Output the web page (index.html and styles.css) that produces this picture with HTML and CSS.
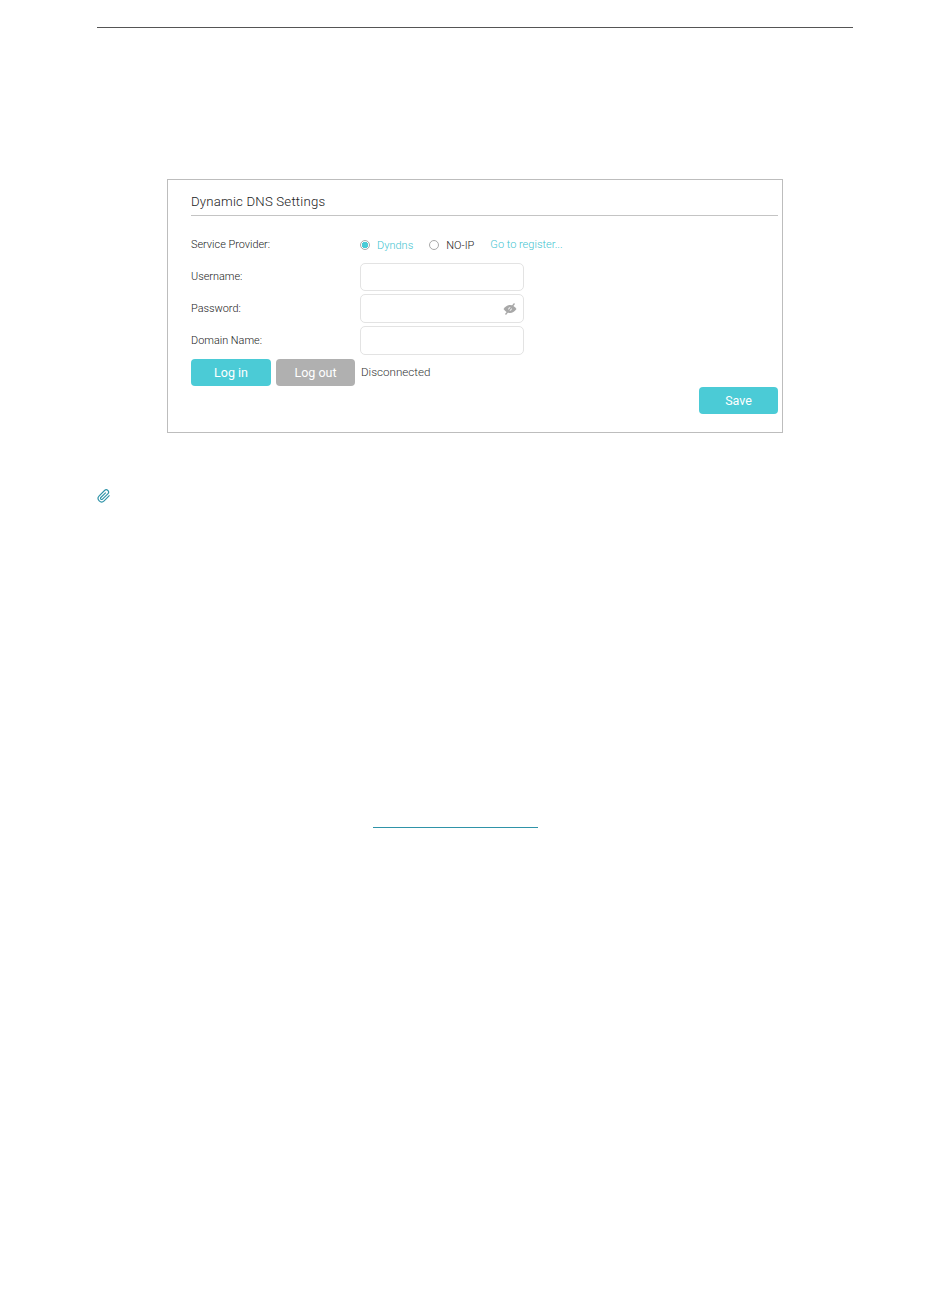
FILE: index.html
```html
<!DOCTYPE html>
<html lang="en">
<head>
<meta charset="utf-8">
<title>Dynamic DNS Settings</title>
<link rel="stylesheet" href="styles.css">
</head>
<body>
<main class="page">
  <hr class="top-rule">
  <section class="card">
    <h2 class="card-title">Dynamic DNS Settings</h2>
    <div class="rows">
      <div class="row row-provider">
        <span class="label">Service Provider:</span>
        <div class="providers">
          <span class="radio radio-on"></span>
          <span class="option option-on">Dyndns</span>
          <span class="radio"></span>
          <span class="option">NO-IP</span>
          <span class="register">Go to register...</span>
        </div>
      </div>
      <div class="row">
        <span class="label">Username:</span>
        <div class="field"></div>
      </div>
      <div class="row row-password">
        <span class="label">Password:</span>
        <div class="field">
          <svg class="eye" viewBox="0 0 14 12" width="14" height="12" aria-hidden="true">
            <path class="eye-body" d="M0.5 6C2.5 3.2 4.6 2 7 2s4.500 1.200 6.500 4C11.500 8.800 9.400 10 7 10S2.500 8.800 0.500 6Z"/>
            <circle class="eye-hole" cx="7" cy="6" r="1.700"/>
            <path class="eye-slash" d="M2.500 11.500 11.500 0.500"/>
          </svg>
        </div>
      </div>
      <div class="row row-domain">
        <span class="label">Domain Name:</span>
        <div class="field"></div>
      </div>
      <div class="actions">
        <button class="btn btn-login" type="button">Log in</button>
        <button class="btn btn-logout" type="button">Log out</button>
        <span class="status">Disconnected</span>
      </div>
      <div class="save-row">
        <button class="btn btn-save" type="button">Save</button>
      </div>
    </div>
  </section>
  <svg class="clip" viewBox="0 0 24 24" width="14" height="14" aria-hidden="true">
    <path d="M21.440 11.050l-9.190 9.190a6 6 0 0 1-8.490-8.490l9.190-9.190a4 4 0 0 1 5.660 5.660l-9.200 9.190a2 2 0 0 1-2.830-2.830l8.490-8.480"/>
  </svg>
  <div class="link-line"></div>
</main>
</body>
</html>
```

FILE: styles.css
```css
* {
  box-sizing: border-box;
}

html,
body {
  margin: 0;
  background: #fff;
}

body {
  font-family: Roboto, "Liberation Sans", sans-serif;
  font-weight: 300;
  color: #333;
}

.page {
  width: 950px;
  height: 1290px;
  padding: 27px 97px 0;
  overflow: hidden;
}

.top-rule {
  margin: 0;
  width: 756px;
  height: 1px;
  border: 0;
  background: #555;
}

.card {
  margin: 151px 0 0 70px;
  width: 616px;
  height: 254px;
  padding: 0 4px 0 23px;
  border: 1px solid #bdbdbd;
}

.card-title {
  margin: 0;
  height: 36px;
  padding-top: 13px;
  border-bottom: 1px solid #c4c4c4;
  font-size: 13.200px;
  letter-spacing: 0.200px;
  line-height: 17px;
  font-weight: 300;
  color: #222;
}

.rows {
  display: flex;
  flex-direction: column;
}

.row {
  display: flex;
  align-items: center;
  height: 28px;
}

.row-provider {
  margin-top: 15px;
  margin-bottom: 4px;
}

.row-password {
  margin-top: 3px;
  height: 29px;
}

.row-domain {
  margin-top: 3px;
  height: 29px;
}

.label {
  width: 169px;
  font-size: 10.900px;
  line-height: 14px;
  color: #222;
}

.providers {
  display: flex;
  align-items: center;
}

.radio {
  width: 10px;
  height: 10px;
  border: 1px solid #a9a9a9;
  border-radius: 50%;
  background: #fff;
}

.radio-on {
  background: radial-gradient(circle, #4bcbd6 0 3px, #fff 3.500px);
}

.option {
  margin: 0 16px 0 7px;
  font-size: 11px;
  color: #222;
}

.option-on {
  color: #3fc4d0;
}

.register {
  font-size: 11px;
  color: #3fc4d0;
  margin-left: 0;
  position: relative;
  top: -1px;
}

.field {
  display: flex;
  align-items: center;
  justify-content: flex-end;
  width: 164px;
  height: 100%;
  padding-right: 6px;
  border: 1px solid #e3e3e3;
  border-radius: 5px;
}

.eye-body {
  fill: #a8a8a8;
}

.eye-hole {
  fill: #fff;
}

.eye-slash {
  fill: none;
  stroke: #a8a8a8;
  stroke-width: 1.300;
}

.actions {
  display: flex;
  align-items: center;
  margin-top: 4px;
  height: 27px;
}

.btn {
  height: 27px;
  padding: 0;
  border: 0;
  border-radius: 4px;
  font-family: inherit;
  font-size: 12.500px;
  font-weight: 400;
  color: #fff;
  background: #4bcbd6;
}

.btn-login {
  width: 80px;
}

.btn-logout {
  width: 79px;
  margin-left: 5px;
  background: #b0b0b0;
}

.status {
  margin-left: 6px;
  font-size: 11.600px;
  color: #333;
  position: relative;
  top: -1px;
}

.save-row {
  display: flex;
  justify-content: flex-end;
  margin-top: 1px;
}

.btn-save {
  width: 79px;
}

.clip {
  display: block;
  margin-top: 56px;
  fill: none;
  stroke: #2f93a8;
  stroke-width: 2;
}

.link-line {
  margin: 324px 0 0 276px;
  width: 165px;
  height: 1px;
  background: #2f93a8;
}
```
